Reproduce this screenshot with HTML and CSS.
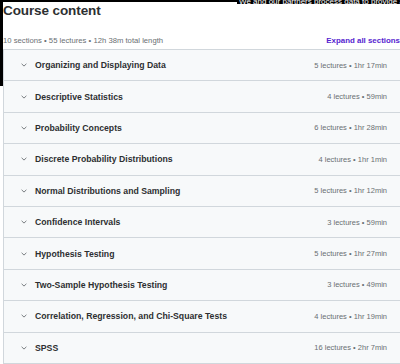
FILE: index.html
```html
<!DOCTYPE html>
<html lang="en">
<head>
    <meta charset="UTF-8">
    <meta name="viewport" content="width=device-width, initial-scale=1.0">
    <title>Course content</title>
    <link rel="stylesheet" href="styles.css">
</head>
<body>
    <div class="cookie-top"></div>
    <div class="cookie-banner">We and our partners process data to provide and improve our services</div>
    <div class="cookie-side"></div>

    <div class="course-content">
        <h2>Course content</h2>
        <div class="summary">
            <span>10 sections • 55 lectures • 12h 38m total length</span>
            <button class="expand-all">Expand all sections</button>
        </div>

        <div class="sections">
            <div class="section">
                <span class="chevron"><svg width="6" height="4" viewBox="0 0 6 4"><path d="M0.6 0.8 L3 3.1 L5.4 0.8" fill="none" stroke="#6a6f73" stroke-width="0.9"/></svg></span>
                <span class="section-title">Organizing and Displaying Data</span>
                <span class="section-meta">5 lectures • 1hr 17min</span>
            </div>
            <div class="section">
                <span class="chevron"><svg width="6" height="4" viewBox="0 0 6 4"><path d="M0.6 0.8 L3 3.1 L5.4 0.8" fill="none" stroke="#6a6f73" stroke-width="0.9"/></svg></span>
                <span class="section-title">Descriptive Statistics</span>
                <span class="section-meta">4 lectures • 59min</span>
            </div>
            <div class="section">
                <span class="chevron"><svg width="6" height="4" viewBox="0 0 6 4"><path d="M0.6 0.8 L3 3.1 L5.4 0.8" fill="none" stroke="#6a6f73" stroke-width="0.9"/></svg></span>
                <span class="section-title">Probability Concepts</span>
                <span class="section-meta">6 lectures • 1hr 28min</span>
            </div>
            <div class="section">
                <span class="chevron"><svg width="6" height="4" viewBox="0 0 6 4"><path d="M0.6 0.8 L3 3.1 L5.4 0.8" fill="none" stroke="#6a6f73" stroke-width="0.9"/></svg></span>
                <span class="section-title">Discrete Probability Distributions</span>
                <span class="section-meta">4 lectures • 1hr 1min</span>
            </div>
            <div class="section">
                <span class="chevron"><svg width="6" height="4" viewBox="0 0 6 4"><path d="M0.6 0.8 L3 3.1 L5.4 0.8" fill="none" stroke="#6a6f73" stroke-width="0.9"/></svg></span>
                <span class="section-title">Normal Distributions and Sampling</span>
                <span class="section-meta">5 lectures • 1hr 12min</span>
            </div>
            <div class="section">
                <span class="chevron"><svg width="6" height="4" viewBox="0 0 6 4"><path d="M0.6 0.8 L3 3.1 L5.4 0.8" fill="none" stroke="#6a6f73" stroke-width="0.9"/></svg></span>
                <span class="section-title">Confidence Intervals</span>
                <span class="section-meta">3 lectures • 59min</span>
            </div>
            <div class="section">
                <span class="chevron"><svg width="6" height="4" viewBox="0 0 6 4"><path d="M0.6 0.8 L3 3.1 L5.4 0.8" fill="none" stroke="#6a6f73" stroke-width="0.9"/></svg></span>
                <span class="section-title">Hypothesis Testing</span>
                <span class="section-meta">5 lectures • 1hr 27min</span>
            </div>
            <div class="section">
                <span class="chevron"><svg width="6" height="4" viewBox="0 0 6 4"><path d="M0.6 0.8 L3 3.1 L5.4 0.8" fill="none" stroke="#6a6f73" stroke-width="0.9"/></svg></span>
                <span class="section-title">Two-Sample Hypothesis Testing</span>
                <span class="section-meta">3 lectures • 49min</span>
            </div>
            <div class="section">
                <span class="chevron"><svg width="6" height="4" viewBox="0 0 6 4"><path d="M0.6 0.8 L3 3.1 L5.4 0.8" fill="none" stroke="#6a6f73" stroke-width="0.9"/></svg></span>
                <span class="section-title">Correlation, Regression, and Chi-Square Tests</span>
                <span class="section-meta">4 lectures • 1hr 19min</span>
            </div>
            <div class="section">
                <span class="chevron"><svg width="6" height="4" viewBox="0 0 6 4"><path d="M0.6 0.8 L3 3.1 L5.4 0.8" fill="none" stroke="#6a6f73" stroke-width="0.9"/></svg></span>
                <span class="section-title">SPSS</span>
                <span class="section-meta">16 lectures • 2hr 7min</span>
            </div>
        </div>
    </div>
</body>
</html>
```

FILE: styles.css
```css
body {
    margin: 0;
    background: #fff;
    color: #2d2f31;
    font-family: 'Liberation Sans', Arial, sans-serif;
    overflow: hidden;
}
.cookie-top {
    position: absolute;
    left: 0;
    top: 0;
    width: 100%;
    height: 2px;
    background: #000;
}
.cookie-banner {
    position: absolute;
    left: 237px;
    top: 0;
    right: 0;
    height: 4px;
    background: #000;
    color: #fff;
    font-size: 8px;
    line-height: 4px;
    padding-left: 2px;
    white-space: nowrap;
    overflow: hidden;
}
.cookie-side {
    position: absolute;
    left: 0;
    top: 0;
    width: 3px;
    height: 86px;
    background: #000;
}
.course-content {
    padding: 2px 0 0 3px;
}
h2 {
    margin: 0;
    font-size: 13.5px;
    line-height: 17px;
    font-weight: bold;
    letter-spacing: -0.1px;
}
.summary {
    display: flex;
    justify-content: space-between;
    align-items: center;
    margin-top: 12px;
    height: 18px;
    font-size: 7.7px;
    color: #6a6f73;
}
.expand-all {
    border: none;
    background: none;
    padding: 0;
    font-family: inherit;
    font-size: 7.9px;
    font-weight: bold;
    color: #5624d0;
}
.sections {
    border: 1px solid #d1d7dc;
    border-right: none;
}
.section {
    display: flex;
    align-items: center;
    height: 30.4px;
    padding: 0 13px 0 17px;
    background: #f7f9fa;
    border-bottom: 1px solid #d1d7dc;
}
.section:last-child {
    border-bottom: none;
}
.chevron {
    display: flex;
    width: 14px;
}
.section-title {
    flex: 1;
    font-size: 8.7px;
    font-weight: bold;
}
.section-meta {
    font-size: 7.5px;
    color: #6a6f73;
}
```
